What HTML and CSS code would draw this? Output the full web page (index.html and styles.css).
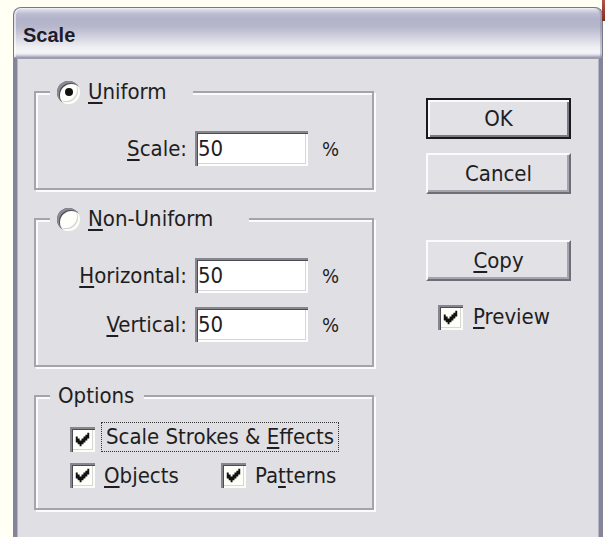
FILE: index.html
```html
<!DOCTYPE html>
<html lang="en">
<head>
<meta charset="utf-8">
<title>Scale</title>
<link rel="stylesheet" href="styles.css">
</head>
<body>
<div class="window">
  <div class="titlebar"><span class="title">Scale</span></div>
  <div class="client">
    <div class="groups">
      <section class="group">
        <div class="legend legend-uniform">
          <span class="radio checked"></span><span><u>U</u>niform</span>
        </div>
        <div class="fields">
          <span class="field-label"><u>S</u>cale:</span>
          <span class="input">50</span>
          <span class="unit">%</span>
        </div>
      </section>

      <section class="group">
        <div class="legend legend-nonuniform">
          <span class="radio"></span><span><u>N</u>on-Uniform</span>
        </div>
        <div class="fields">
          <span class="field-label"><u>H</u>orizontal:</span>
          <span class="input">50</span>
          <span class="unit">%</span>
          <span class="field-label"><u>V</u>ertical:</span>
          <span class="input">50</span>
          <span class="unit">%</span>
        </div>
      </section>

      <section class="group">
        <div class="legend legend-text">Options</div>
        <div class="checks">
          <div class="check-row">
            <span class="checkbox"><svg viewBox="0 0 13 13"><polygon points="3,5 4,5 4,6 5,6 5,7 6,7 6,6 7,6 7,5 8,5 8,4 9,4 9,3 10,3 10,6 9,6 9,7 8,7 8,8 7,8 7,9 6,9 6,10 5,10 5,9 4,9 4,8 3,8"/></svg></span>
            <span class="focus"><span>Scale Strokes &amp; <u>E</u>ffects</span></span>
          </div>
          <div class="check-row">
            <span class="check-item check-item-wide">
              <span class="checkbox"><svg viewBox="0 0 13 13"><polygon points="3,5 4,5 4,6 5,6 5,7 6,7 6,6 7,6 7,5 8,5 8,4 9,4 9,3 10,3 10,6 9,6 9,7 8,7 8,8 7,8 7,9 6,9 6,10 5,10 5,9 4,9 4,8 3,8"/></svg></span>
              <span><u>O</u>bjects</span>
            </span>
            <span class="check-item">
              <span class="checkbox"><svg viewBox="0 0 13 13"><polygon points="3,5 4,5 4,6 5,6 5,7 6,7 6,6 7,6 7,5 8,5 8,4 9,4 9,3 10,3 10,6 9,6 9,7 8,7 8,8 7,8 7,9 6,9 6,10 5,10 5,9 4,9 4,8 3,8"/></svg></span>
              <span>Pa<u>t</u>terns</span>
            </span>
          </div>
        </div>
      </section>
    </div>

    <div class="actions">
      <div class="btn btn-default">OK</div>
      <div class="btn btn-cancel">Cancel</div>
      <div class="btn btn-copy"><span><u>C</u>opy</span></div>
      <div class="check-item preview">
        <span class="checkbox"><svg viewBox="0 0 13 13"><polygon points="3,5 4,5 4,6 5,6 5,7 6,7 6,6 7,6 7,5 8,5 8,4 9,4 9,3 10,3 10,6 9,6 9,7 8,7 8,8 7,8 7,9 6,9 6,10 5,10 5,9 4,9 4,8 3,8"/></svg></span>
        <span><u>P</u>review</span>
      </div>
    </div>
  </div>
</div>
</body>
</html>
```

FILE: styles.css
```css
html, body {
  margin: 0;
  padding: 0;
}

body {
  background: #fffff3;
  font-family: "DejaVu Sans Condensed", "DejaVu Sans", sans-serif;
  font-stretch: condensed;
  font-size: 22px;
  line-height: 26px;
  color: #1e1e22;
  overflow: hidden;
}

u {
  text-decoration-thickness: 2px;
  text-underline-offset: 3px;
}

/* ---------- window frame ---------- */

.window {
  margin: 7px 0 0 13px;
  width: 590px;
}

.titlebar {
  position: relative;
  box-sizing: border-box;
  height: 50px;
  border: 1px solid #77778c;
  border-bottom: 0;
  border-radius: 8px 8px 0 0;
  padding: 4px 0 0 9px;
  display: flex;
  align-items: center;
  background: linear-gradient(to bottom,
    #f4f4f8 0,
    #d8d8e6 2px,
    #bcbcd2 6px,
    #b2b2ca 11px,
    #b6b6cc 18px,
    #c4c4d6 24px,
    #d8d8e4 31px,
    #ebebf1 38px,
    #f6f6f9 44px,
    #ececf2 46px,
    #c2c2d2 48px,
    #a6a6ba 49px);
  box-shadow: inset 2px 0 0 rgba(255, 255, 255, 0.55), inset -2px 0 0 rgba(120, 120, 140, 0.35);
}

/* edge of the neighbouring close button */
.titlebar::after {
  content: "";
  position: absolute;
  right: -3px;
  top: -8px;
  width: 3px;
  height: 21px;
  background: linear-gradient(to bottom, #b0574a, #7e2c24);
}

.title {
  font-family: "Liberation Sans", Arial, sans-serif;
  font-weight: bold;
  font-size: 20px;
  line-height: 24px;
  color: #1c1c2a;
}

.client {
  box-sizing: border-box;
  height: 500px;
  display: flex;
  align-items: flex-start;
  background: #e0dfe3;
  border-top: 2px solid #9d9db0;
  border-left: 4px solid #85859a;
  border-right: 4px solid #85859a;
  box-shadow: inset 1px 0 0 #b4b4c4, inset -1px 0 0 #b4b4c4;
  padding: 32px 0 0 17px;
}

/* ---------- group boxes ---------- */

.groups {
  flex: none;
  width: 340px;
  display: flex;
  flex-direction: column;
  gap: 28px;
}

.group {
  box-sizing: border-box;
  width: 340px;
  border: 2px solid #a4a4ac;
  box-shadow: inset 2px 2px 0 #fbfbfb, 2px 2px 0 #fbfbfb;
  padding: 0 0 22px;
}

.group + .group {
  padding-bottom: 23px;
}

.group:last-child {
  padding-bottom: 20px;
}

.legend {
  box-sizing: border-box;
  height: 26px;
  margin: -14px 0 0 14px;
  display: flex;
  align-items: center;
  background: #e0dfe3;
}

.legend-uniform {
  width: 143px;
  padding-left: 7px;
  gap: 8px;
}

.legend-nonuniform {
  width: 199px;
  padding-left: 7px;
  gap: 8px;
}

.legend-text {
  width: max-content;
  padding: 0 10px 0 8px;
}

.radio {
  flex: none;
  width: 23px;
  height: 23px;
  border-radius: 50%;
  background: #fffffa;
  box-shadow:
    inset 2px 2px 0 #8a8a92,
    inset 3px 3px 0 #505058,
    inset -2px -2px 0 #fdfdf8,
    inset -3px -3px 0 #d2d2d6;
  display: grid;
  place-items: center;
}

.radio.checked::after {
  content: "";
  width: 8px;
  height: 8px;
  border-radius: 50%;
  background: #111;
}

.fields {
  margin-top: 26px;
  display: grid;
  grid-template-columns: 151px 113px auto;
  column-gap: 8px;
  row-gap: 14px;
  align-items: center;
}

.field-label {
  text-align: right;
}

.input {
  box-sizing: border-box;
  height: 35px;
  padding-left: 3px;
  display: flex;
  align-items: center;
  background: #fff;
  box-shadow:
    inset 2px 2px 0 #86868e,
    inset 3px 3px 0 #4c4c54,
    inset -2px -2px 0 #fdfdfd,
    inset -3px -3px 0 #d6d6da;
}

.unit {
  margin-left: 6px;
  font-size: 20px;
}

/* ---------- checkboxes ---------- */

.checks {
  margin: 18px 0 0 34px;
  display: flex;
  flex-direction: column;
  gap: 11px;
}

.check-row {
  display: flex;
  align-items: center;
  height: 25px;
}

.checkbox {
  flex: none;
  width: 25px;
  height: 25px;
  background: #fffffa;
  box-shadow:
    inset 2px 2px 0 #86868e,
    inset 3px 3px 0 #4c4c54,
    inset -2px -2px 0 #fdfdf8,
    inset -3px -3px 0 #d6d6da;
}

.checkbox svg {
  display: block;
  width: 25px;
  height: 25px;
  fill: #111;
}

.focus {
  margin-left: 6px;
  height: 30px;
  box-sizing: border-box;
  border: 1px dotted #333;
  padding: 0 4px;
  display: flex;
  align-items: center;
  margin-top: -6px;
}

.check-item {
  display: flex;
  align-items: center;
  gap: 9px;
}

.check-item-wide {
  width: 151px;
}

/* ---------- buttons ---------- */

.actions {
  flex: none;
  width: 145px;
  margin: 7px 0 0 52px;
  display: flex;
  flex-direction: column;
}

.btn {
  box-sizing: border-box;
  height: 41px;
  display: flex;
  align-items: center;
  justify-content: center;
  background: #e2e1e6;
  border: 2px solid;
  border-color: #fbfbfb #6e6e78 #6e6e78 #fbfbfb;
  box-shadow: inset -2px -2px 0 #a4a4ae;
}

.btn-default {
  border-color: #1a1a1e;
  box-shadow: inset 2px 2px 0 #fbfbfb, inset -2px -2px 0 #7a7a84;
}

.btn-cancel {
  margin-top: 14px;
}

.btn-copy {
  margin-top: 46px;
}

.preview {
  margin: 23px 0 0 12px;
  gap: 10px;
}
```
